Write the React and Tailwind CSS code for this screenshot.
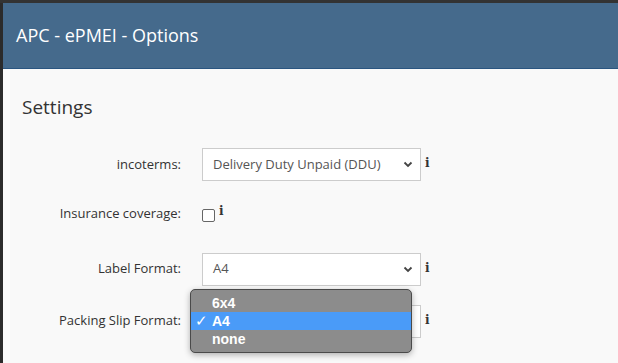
import React from 'react';

const font = { fontFamily: '"Open Sans", sans-serif' };

function Chevron() {
  return (
    <svg width="10" height="7" viewBox="0 0 10 7" className="shrink-0">
      <path d="M1.5 1.5 L5 5 L8.5 1.5" fill="none" stroke="#444" strokeWidth="1.8" />
    </svg>
  );
}

function Info() {
  return (
    <span className="ml-[4px] block text-[12px] font-bold leading-none text-[#333] [font-family:'DejaVu_Serif',serif]">
      i
    </span>
  );
}

function FakeSelect({ value }) {
  return (
    <div className="flex h-[33px] w-[219px] items-center justify-between border border-[#ccc] bg-white pl-[10px] pr-[7px] text-[13px] text-[#555]">
      <span>{value}</span>
      <Chevron />
    </div>
  );
}

function Row({ label, children, className }) {
  return (
    <div className={`flex items-center ${className}`}>
      <div className="w-[178px] shrink-0 text-right text-[13px] text-[#333]">{label}</div>
      <div className="ml-[21px] flex items-start">{children}</div>
    </div>
  );
}

export default function App() {
  return (
    <div className="flex h-[363px] w-[618px] flex-col overflow-hidden bg-[#f9f9f9]" style={font}>
      <div className="h-[3px] shrink-0 bg-[#333]" />
      <div className="flex flex-1">
        <div className="w-[3px] shrink-0 bg-[#2b2b2b]" />
        <div className="relative flex-1">
          <header className="flex h-[66px] items-center border-b border-[#2a5580] bg-[#456a8c] pl-[13px] text-[18px] text-white">
            APC - ePMEI - Options
          </header>
          <div className="pl-[19px]">
            <h2 className="mt-[27px] text-[19px] leading-[23px] text-[#333]">Settings</h2>
          </div>
          <div className="mt-[29px]">
            <Row label="incoterms:">
              <FakeSelect value="Delivery Duty Unpaid (DDU)" />
              <div className="pt-[9px]"><Info /></div>
            </Row>
            <Row label="Insurance coverage:" className="mt-[23px]">
              <div className="mt-[4px] h-[13px] w-[13px] rounded-[2px] border border-[#666] bg-white" />
              <Info />
            </Row>
            <Row label="Label Format:" className="mt-[29px]">
              <FakeSelect value="A4" />
              <div className="pt-[9px]"><Info /></div>
            </Row>
            <Row label="Packing Slip Format:" className="mt-[19px]">
              <FakeSelect value="A4" />
              <div className="pt-[9px]"><Info /></div>
            </Row>
          </div>
          <div className="absolute left-[187px] top-[286px] w-[222px] rounded-[5px] border border-[#4a4a4a] bg-[#8c8c8c] py-[4px] text-[14px] font-bold text-white [font-family:'Liberation_Sans',Arial,sans-serif] shadow-[0_2px_6px_rgba(0,0,0,0.3)]">
            <div className="flex h-[18px] items-center pl-[21px]">6x4</div>
            <div className="flex h-[18px] items-center bg-[#4a9bf8]">
              <span className="w-[21px] pl-[4px] text-[15px] font-normal">✓</span>A4
            </div>
            <div className="flex h-[18px] items-center pl-[21px]">none</div>
          </div>
        </div>
      </div>
    </div>
  );
}
